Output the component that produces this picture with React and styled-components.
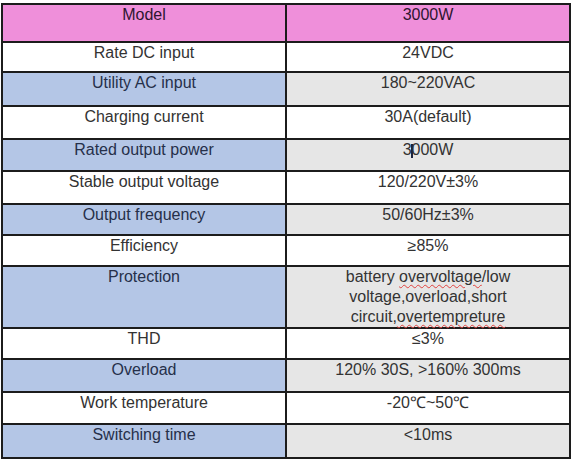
import React, { Fragment } from "react";
import styled, { createGlobalStyle } from "styled-components";

const rows = [
  { label: "Model", value: "3000W", h: 38, tone: "head" },
  { label: "Rate DC input", value: "24VDC", h: 30 },
  { label: "Utility AC input", value: "180~220VAC", h: 34, tone: "alt" },
  { label: "Charging current", value: "30A(default)", h: 33 },
  { label: "Rated output power", value: "caret", h: 32, tone: "alt" },
  { label: "Stable output voltage", value: "120/220V±3%", h: 33 },
  { label: "Output frequency", value: "50/60Hz±3%", h: 31, tone: "alt" },
  { label: "Efficiency", value: "≥85%", h: 31 },
  { label: "Protection", value: "protection", h: 62, tone: "alt" },
  { label: "THD", value: "≤3%", h: 31 },
  { label: "Overload", value: "120% 30S, >160% 300ms", h: 33, tone: "alt" },
  { label: "Work temperature", value: "-20℃~50℃", h: 32 },
  { label: "Switching time", value: "<10ms", h: 34, tone: "alt" },
];

const renderValue = (value) => {
  if (value === "caret") {
    return <>3<Caret />000W</>;
  }
  if (value === "protection") {
    return (
      <>
        battery <Typo>overvoltage</Typo>/low voltage,overload,short circuit,<Typo>overtempreture</Typo>
      </>
    );
  }
  return value;
};

const App = () => {
  return (
    <>
      <GlobalStyle />
      <Page>
        <Grid>
          {rows.map(({ label, value, h, tone }) => (
            <Fragment key={label}>
              <Cell $h={h} $bg={tone === "head" ? "#ef8fda" : tone === "alt" ? "#b4c6e6" : "#fff"} $color={tone === "head" ? "#2e1530" : tone === "alt" ? "#26304a" : "#333"}>
                {label}
              </Cell>
              <Cell $h={h} $bg={tone === "head" ? "#ef8fda" : tone === "alt" ? "#e6e6e6" : "#fff"} $color={tone === "head" ? "#2e1530" : "#333"}>
                {renderValue(value)}
              </Cell>
            </Fragment>
          ))}
        </Grid>
      </Page>
    </>
  );
};

export default App;

const GlobalStyle = createGlobalStyle`
  body {
    margin: 0;
    background: #fff;
    font-family: "Liberation Sans", Arial, sans-serif;
  }
`;

const Page = styled.div`
  padding: 3px 0 0 1px;
`;

const Grid = styled.div`
  display: grid;
  grid-template-columns: 284px 284px;
  width: 570px;
  box-sizing: border-box;
  border-top: 2px solid #1c1c1c;
  border-left: 2px solid #1c1c1c;
`;

const Cell = styled.div`
  box-sizing: border-box;
  height: ${(p) => p.$h}px;
  padding: 0 4px;
  background: ${(p) => p.$bg};
  color: ${(p) => p.$color};
  border-right: 2px solid #1c1c1c;
  border-bottom: 2px solid #1c1c1c;
  text-align: center;
  font-size: 16px;
  line-height: 20px;
`;

const Typo = styled.span`
  text-decoration: underline wavy #e0423f;
  text-decoration-thickness: 1px;
  text-underline-offset: 2px;
`;

const Caret = styled.span`
  display: inline-block;
  width: 2px;
  height: 14px;
  margin: 0 -1px;
  vertical-align: -3px;
  background: #1b2440;
`;
